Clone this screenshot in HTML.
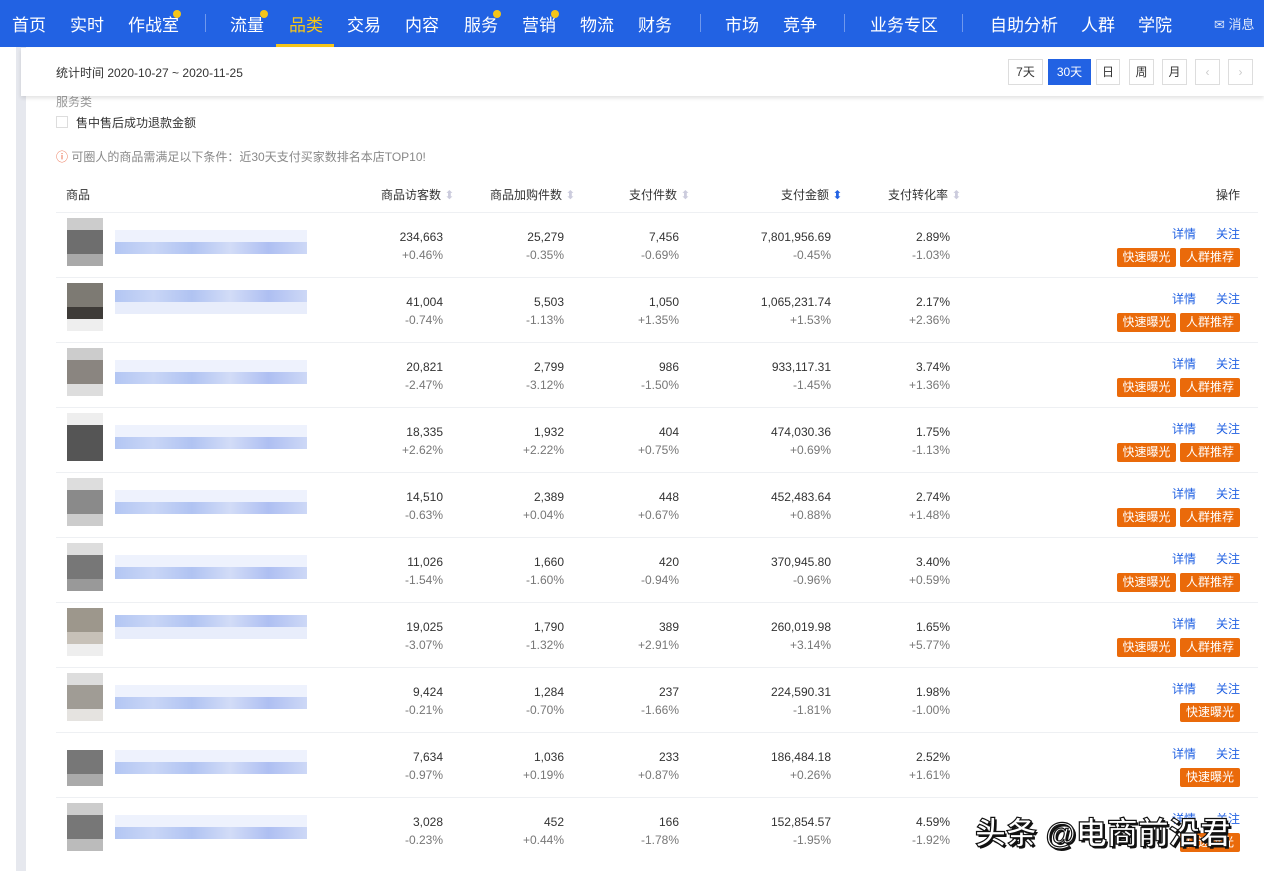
<!DOCTYPE html>
<html><head><meta charset="utf-8"><style>
*{margin:0;padding:0;box-sizing:border-box}
body{width:1264px;height:871px;overflow:hidden;background:#fff;font-family:"Liberation Sans","Noto Sans CJK SC",sans-serif;position:relative;color:#333}
.nav{position:absolute;left:0;top:0;width:1264px;height:47px;background:#2262e3;color:#fff;font-size:17px}
.nav span{position:absolute;top:11px;white-space:nowrap}
.dot{position:absolute;width:8px;height:8px;border-radius:50%;background:#f5c518}
.sep{position:absolute;top:14px;width:1px;height:18px;background:rgba(255,255,255,.35)}
.ul{position:absolute;left:276px;top:44px;width:58px;height:3px;background:#f5c518}
.strip{position:absolute;left:16px;top:47px;width:10px;height:824px;background:#e6e8ee}
.hdr{position:absolute;left:21px;top:48px;width:1243px;height:48px;background:#fff;box-shadow:0 2px 4px rgba(0,0,0,.12);z-index:2}
.hdr .t{position:absolute;left:35px;top:16px;font-size:12px;color:#333}
.btn{position:absolute;top:11px;height:26px;border:1px solid #ddd;font-size:12px;line-height:24px;text-align:center;color:#333;background:#fff}
.sm{font-size:12px;position:absolute;white-space:nowrap}
.row{position:absolute;left:56px;width:1202px;height:65px;border-top:1px solid #eef0f3}
.th{position:absolute;top:5px;width:36px;height:48px;left:11px}
.bar{position:absolute;left:59px;top:17px;width:192px;height:12px;background:#eef2fd}
.bar2{position:absolute;left:59px;top:29px;width:192px;height:12px;background:linear-gradient(90deg,#b3c6f3,#c9d6f6,#b0c3f2,#d2dcf7,#aebff2,#cdd8f6)}
.n{position:absolute;top:15px;font-size:12px;text-align:right;line-height:18px;color:#333}
.n i{font-style:normal;color:#777;display:block}
.a{position:absolute;top:12px;font-size:12px;color:#2262e3}
.o{position:absolute;top:35px;height:19px;background:#ea6a0a;color:#fff;font-size:12px;line-height:19px;text-align:center;border-radius:2px}
.wm{position:absolute;left:975px;top:808px;font-size:31px;color:#fff;-webkit-text-stroke:1.2px #111;text-shadow:2px 2px 0 #111;font-weight:bold;z-index:5}
</style></head><body>
<div class="nav">
<span style="left:12px">首页</span><span style="left:70px">实时</span><span style="left:128px">作战室</span><div class="dot" style="left:173px;top:10px"></div>
<div class="sep" style="left:205px"></div>
<span style="left:230px">流量</span><div class="dot" style="left:260px;top:10px"></div>
<span style="left:289px;color:#f5c518">品类</span>
<span style="left:347px">交易</span><span style="left:405px">内容</span>
<span style="left:464px">服务</span><div class="dot" style="left:493px;top:10px"></div>
<span style="left:522px">营销</span><div class="dot" style="left:551px;top:10px"></div>
<span style="left:580px">物流</span><span style="left:638px">财务</span>
<div class="sep" style="left:700px"></div>
<span style="left:725px">市场</span><span style="left:783px">竞争</span>
<div class="sep" style="left:844px"></div>
<span style="left:870px">业务专区</span>
<div class="sep" style="left:962px"></div>
<span style="left:990px">自助分析</span><span style="left:1081px">人群</span><span style="left:1138px">学院</span>
<span style="left:1214px;font-size:13px;top:14px;opacity:.85">✉ 消息</span>
</div>
<div class="ul"></div>
<div class="strip"></div>
<div class="hdr"><div class="t">统计时间 2020-10-27 ~ 2020-11-25</div>
<div class="btn" style="left:987px;width:35px">7天</div>
<div class="btn" style="left:1027px;width:43px;background:#2262e3;color:#fff;border-color:#2262e3">30天</div>
<div class="btn" style="left:1075px;width:24px">日</div>
<div class="btn" style="left:1108px;width:25px">周</div>
<div class="btn" style="left:1141px;width:25px">月</div>
<div class="btn" style="left:1174px;width:25px;color:#ccc">‹</div>
<div class="btn" style="left:1207px;width:25px;color:#ccc">›</div>
</div>
<div class="sm" style="left:56px;top:93px;color:#999">服务类</div>
<div style="position:absolute;left:56px;top:116px;width:12px;height:12px;border:1px solid #ddd"></div>
<div class="sm" style="left:76px;top:114px">售中售后成功退款金额</div>
<div class="sm" style="left:56px;top:148px;color:#888"><span style="color:#e8603c">ⓘ</span> 可圈人的商品需满足以下条件：近30天支付买家数排名本店TOP10!</div>
<div class="sm" style="left:66px;top:186px">商品</div>
<div class="sm" style="left:381px;top:186px">商品访客数 <span style="color:#ccd">⬍</span></div>
<div class="sm" style="left:490px;top:186px">商品加购件数 <span style="color:#ccd">⬍</span></div>
<div class="sm" style="left:629px;top:186px">支付件数 <span style="color:#ccd">⬍</span></div>
<div class="sm" style="left:781px;top:186px">支付金额 <span style="color:#2262e3">⬍</span></div>
<div class="sm" style="left:888px;top:186px">支付转化率 <span style="color:#ccd">⬍</span></div>
<div class="sm" style="left:1216px;top:186px">操作</div>

<div class="row" style="top:212px"><div class="th" style="background:linear-gradient(#ccc 25%,#6e6e6e 25% 75%,#a9a9a9 75%)"></div><div class="bar"></div><div class="bar2"></div>
<div class="n" style="right:815px">234,663<i>+0.46%</i></div><div class="n" style="right:694px">25,279<i>-0.35%</i></div><div class="n" style="right:579px">7,456<i>-0.69%</i></div><div class="n" style="right:427px">7,801,956.69<i>-0.45%</i></div><div class="n" style="right:308px">2.89%<i>-1.03%</i></div>
<div class="a" style="left:1116px">详情</div><div class="a" style="left:1160px">关注</div><div class="o" style="left:1061px;width:59px">快速曝光</div><div class="o" style="left:1124px;width:60px">人群推荐</div></div>

<div class="row" style="top:277px"><div class="th" style="background:linear-gradient(#7d7a73 50%,#3e3b38 50% 75%,#eee 75%)"></div><div class="bar2" style="top:12px"></div><div class="bar" style="top:24px;background:#e8edfb"></div>
<div class="n" style="right:815px">41,004<i>-0.74%</i></div><div class="n" style="right:694px">5,503<i>-1.13%</i></div><div class="n" style="right:579px">1,050<i>+1.35%</i></div><div class="n" style="right:427px">1,065,231.74<i>+1.53%</i></div><div class="n" style="right:308px">2.17%<i>+2.36%</i></div>
<div class="a" style="left:1116px">详情</div><div class="a" style="left:1160px">关注</div><div class="o" style="left:1061px;width:59px">快速曝光</div><div class="o" style="left:1124px;width:60px">人群推荐</div></div>

<div class="row" style="top:342px"><div class="th" style="background:linear-gradient(#ccc 25%,#8a8580 25% 75%,#ddd 75%)"></div><div class="bar"></div><div class="bar2"></div>
<div class="n" style="right:815px">20,821<i>-2.47%</i></div><div class="n" style="right:694px">2,799<i>-3.12%</i></div><div class="n" style="right:579px">986<i>-1.50%</i></div><div class="n" style="right:427px">933,117.31<i>-1.45%</i></div><div class="n" style="right:308px">3.74%<i>+1.36%</i></div>
<div class="a" style="left:1116px">详情</div><div class="a" style="left:1160px">关注</div><div class="o" style="left:1061px;width:59px">快速曝光</div><div class="o" style="left:1124px;width:60px">人群推荐</div></div>

<div class="row" style="top:407px"><div class="th" style="background:linear-gradient(#eee 25%,#555 25% 100%)"></div><div class="bar"></div><div class="bar2"></div>
<div class="n" style="right:815px">18,335<i>+2.62%</i></div><div class="n" style="right:694px">1,932<i>+2.22%</i></div><div class="n" style="right:579px">404<i>+0.75%</i></div><div class="n" style="right:427px">474,030.36<i>+0.69%</i></div><div class="n" style="right:308px">1.75%<i>-1.13%</i></div>
<div class="a" style="left:1116px">详情</div><div class="a" style="left:1160px">关注</div><div class="o" style="left:1061px;width:59px">快速曝光</div><div class="o" style="left:1124px;width:60px">人群推荐</div></div>

<div class="row" style="top:472px"><div class="th" style="background:linear-gradient(#ddd 25%,#8a8a8a 25% 75%,#ccc 75%)"></div><div class="bar"></div><div class="bar2"></div>
<div class="n" style="right:815px">14,510<i>-0.63%</i></div><div class="n" style="right:694px">2,389<i>+0.04%</i></div><div class="n" style="right:579px">448<i>+0.67%</i></div><div class="n" style="right:427px">452,483.64<i>+0.88%</i></div><div class="n" style="right:308px">2.74%<i>+1.48%</i></div>
<div class="a" style="left:1116px">详情</div><div class="a" style="left:1160px">关注</div><div class="o" style="left:1061px;width:59px">快速曝光</div><div class="o" style="left:1124px;width:60px">人群推荐</div></div>

<div class="row" style="top:537px"><div class="th" style="background:linear-gradient(#ddd 25%,#777 25% 75%,#999 75%)"></div><div class="bar"></div><div class="bar2"></div>
<div class="n" style="right:815px">11,026<i>-1.54%</i></div><div class="n" style="right:694px">1,660<i>-1.60%</i></div><div class="n" style="right:579px">420<i>-0.94%</i></div><div class="n" style="right:427px">370,945.80<i>-0.96%</i></div><div class="n" style="right:308px">3.40%<i>+0.59%</i></div>
<div class="a" style="left:1116px">详情</div><div class="a" style="left:1160px">关注</div><div class="o" style="left:1061px;width:59px">快速曝光</div><div class="o" style="left:1124px;width:60px">人群推荐</div></div>

<div class="row" style="top:602px"><div class="th" style="background:linear-gradient(#9d978c 50%,#c7c1b8 50% 75%,#eee 75%)"></div><div class="bar2" style="top:12px"></div><div class="bar" style="top:24px;background:#e8edfb"></div>
<div class="n" style="right:815px">19,025<i>-3.07%</i></div><div class="n" style="right:694px">1,790<i>-1.32%</i></div><div class="n" style="right:579px">389<i>+2.91%</i></div><div class="n" style="right:427px">260,019.98<i>+3.14%</i></div><div class="n" style="right:308px">1.65%<i>+5.77%</i></div>
<div class="a" style="left:1116px">详情</div><div class="a" style="left:1160px">关注</div><div class="o" style="left:1061px;width:59px">快速曝光</div><div class="o" style="left:1124px;width:60px">人群推荐</div></div>

<div class="row" style="top:667px"><div class="th" style="background:linear-gradient(#ddd 25%,#a09c95 25% 75%,#e5e3e0 75%)"></div><div class="bar"></div><div class="bar2"></div>
<div class="n" style="right:815px">9,424<i>-0.21%</i></div><div class="n" style="right:694px">1,284<i>-0.70%</i></div><div class="n" style="right:579px">237<i>-1.66%</i></div><div class="n" style="right:427px">224,590.31<i>-1.81%</i></div><div class="n" style="right:308px">1.98%<i>-1.00%</i></div>
<div class="a" style="left:1116px">详情</div><div class="a" style="left:1160px">关注</div><div class="o" style="left:1124px;width:60px">快速曝光</div></div>

<div class="row" style="top:732px"><div class="th" style="background:linear-gradient(#fff 25%,#777 25% 75%,#aaa 75%)"></div><div class="bar"></div><div class="bar2"></div>
<div class="n" style="right:815px">7,634<i>-0.97%</i></div><div class="n" style="right:694px">1,036<i>+0.19%</i></div><div class="n" style="right:579px">233<i>+0.87%</i></div><div class="n" style="right:427px">186,484.18<i>+0.26%</i></div><div class="n" style="right:308px">2.52%<i>+1.61%</i></div>
<div class="a" style="left:1116px">详情</div><div class="a" style="left:1160px">关注</div><div class="o" style="left:1124px;width:60px">快速曝光</div></div>

<div class="row" style="top:797px"><div class="th" style="background:linear-gradient(#ccc 25%,#777 25% 75%,#bbb 75%)"></div><div class="bar"></div><div class="bar2"></div>
<div class="n" style="right:815px">3,028<i>-0.23%</i></div><div class="n" style="right:694px">452<i>+0.44%</i></div><div class="n" style="right:579px">166<i>-1.78%</i></div><div class="n" style="right:427px">152,854.57<i>-1.95%</i></div><div class="n" style="right:308px">4.59%<i>-1.92%</i></div>
<div class="a" style="left:1116px">详情</div><div class="a" style="left:1160px">关注</div><div class="o" style="left:1124px;width:60px">快速曝光</div></div>

<div class="wm">头条 @电商前沿君</div>
</body></html>
